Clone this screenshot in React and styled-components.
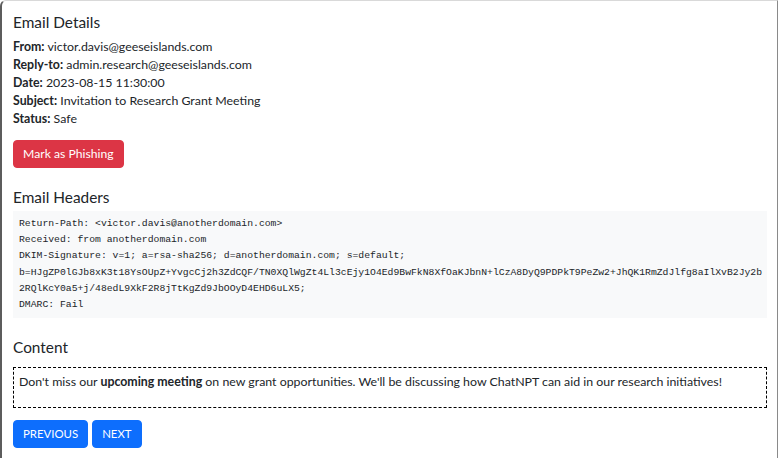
import styled, { createGlobalStyle } from 'styled-components';

const GlobalStyle = createGlobalStyle`
  html, body {
    margin: 0;
    padding: 0;
    background: #ffffff;
  }
  * {
    box-sizing: border-box;
  }
`;

const Ventana = styled.div`
  width: 778px;
  height: 458px;
  background: #fff;
  border-left: 2px solid #5c5c5c;
  border-top: 1px solid #d9d9d9;
  border-right: 1px solid #8a8a8a;
  border-top-left-radius: 6px;
  overflow: hidden;
  font-family: 'Lato', 'Noto Sans', sans-serif;
  font-size: 12.35px;
  line-height: 18px;
  color: #212529;
`;

const Contenido = styled.div`
  padding: 12px 10px 0 11px;
  display: flex;
  flex-direction: column;
  align-items: flex-start;
`;

const Titulo = styled.h5`
  margin: ${props => props.$top || 0}px 0 ${props => props.$bottom || 6}px;
  font-size: 15.4px;
  font-weight: 400;
  line-height: 18px;
`;

const Campos = styled.div`
  display: flex;
  flex-direction: column;
`;

const Campo = styled.div`
  white-space: nowrap;

  strong {
    font-weight: 700;
  }
`;

const Boton = styled.button`
  font-family: inherit;
  font-size: ${props => (props.$mayus ? '11.4px' : '12.2px')};
  line-height: 18px;
  color: #fff;
  background: ${props => props.$color};
  border: 1px solid ${props => props.$color};
  border-radius: 4px;
  padding: 4px 9px;
  height: 28px;
  text-transform: ${props => (props.$mayus ? 'uppercase' : 'none')};
  cursor: pointer;
`;

const Cabeceras = styled.pre`
  align-self: stretch;
  margin: 0;
  padding: 5px 6px;
  background: #f8f9fa;
  font-family: 'Liberation Mono', 'DejaVu Sans Mono', monospace;
  font-size: 9.75px;
  line-height: 16.2px;
  color: #212529;
  white-space: pre;
  overflow: hidden;
`;

const CajaContenido = styled.div`
  align-self: stretch;
  border: 1.5px dashed #000;
  padding: 5px 5px 10px;

  p {
    margin: 0 0 6px;
  }
`;

const Navegacion = styled.div`
  display: flex;
  gap: 4px;
  margin-top: 12px;
`;

const detalles = [
  ['From', 'victor.davis@geeseislands.com'],
  ['Reply-to', 'admin.research@geeseislands.com'],
  ['Date', '2023-08-15 11:30:00'],
  ['Subject', 'Invitation to Research Grant Meeting'],
  ['Status', 'Safe'],
];

const headers = `Return-Path: <victor.davis@anotherdomain.com>
Received: from anotherdomain.com
DKIM-Signature: v=1; a=rsa-sha256; d=anotherdomain.com; s=default;
b=HJgZP0lGJb8xK3t18YsOUpZ+YvgcCj2h3ZdCQF/TN0XQlWgZt4Ll3cEjy1O4Ed9BwFkN8XfOaKJbnN+lCzA8DyQ9PDPkT9PeZw2+JhQK1RmZdJlfg8aIlXvB2Jy2b
2RQlKcY0a5+j/48edL9XkF2R8jTtKgZd9JbOOyD4EHD6uLX5;
DMARC: Fail`;

function App() {
  return (
    <>
      <GlobalStyle />
      <Ventana>
        <Contenido>
          <Titulo $bottom={7}>Email Details</Titulo>
          <Campos>
            {detalles.map(([etiqueta, valor]) => (
              <Campo key={etiqueta}>
                <strong>{etiqueta}:</strong> {valor}
              </Campo>
            ))}
          </Campos>
          <div style={{ marginTop: 12 }}>
            <Boton $color="#dc3545">Mark as Phishing</Boton>
          </div>

          <Titulo $top={20} $bottom={5}>Email Headers</Titulo>
          <Cabeceras>{headers}</Cabeceras>

          <Titulo $top={20} $bottom={11}>Content</Titulo>
          <CajaContenido>
            <p>
              Don't miss our <strong>upcoming meeting</strong> on new grant opportunities. We'll be
              discussing how ChatNPT can aid in our research initiatives!
            </p>
          </CajaContenido>

          <Navegacion>
            <Boton $color="#0d6efd" $mayus>Previous</Boton>
            <Boton $color="#0d6efd" $mayus>Next</Boton>
          </Navegacion>
        </Contenido>
      </Ventana>
    </>
  );
}

export default App;
